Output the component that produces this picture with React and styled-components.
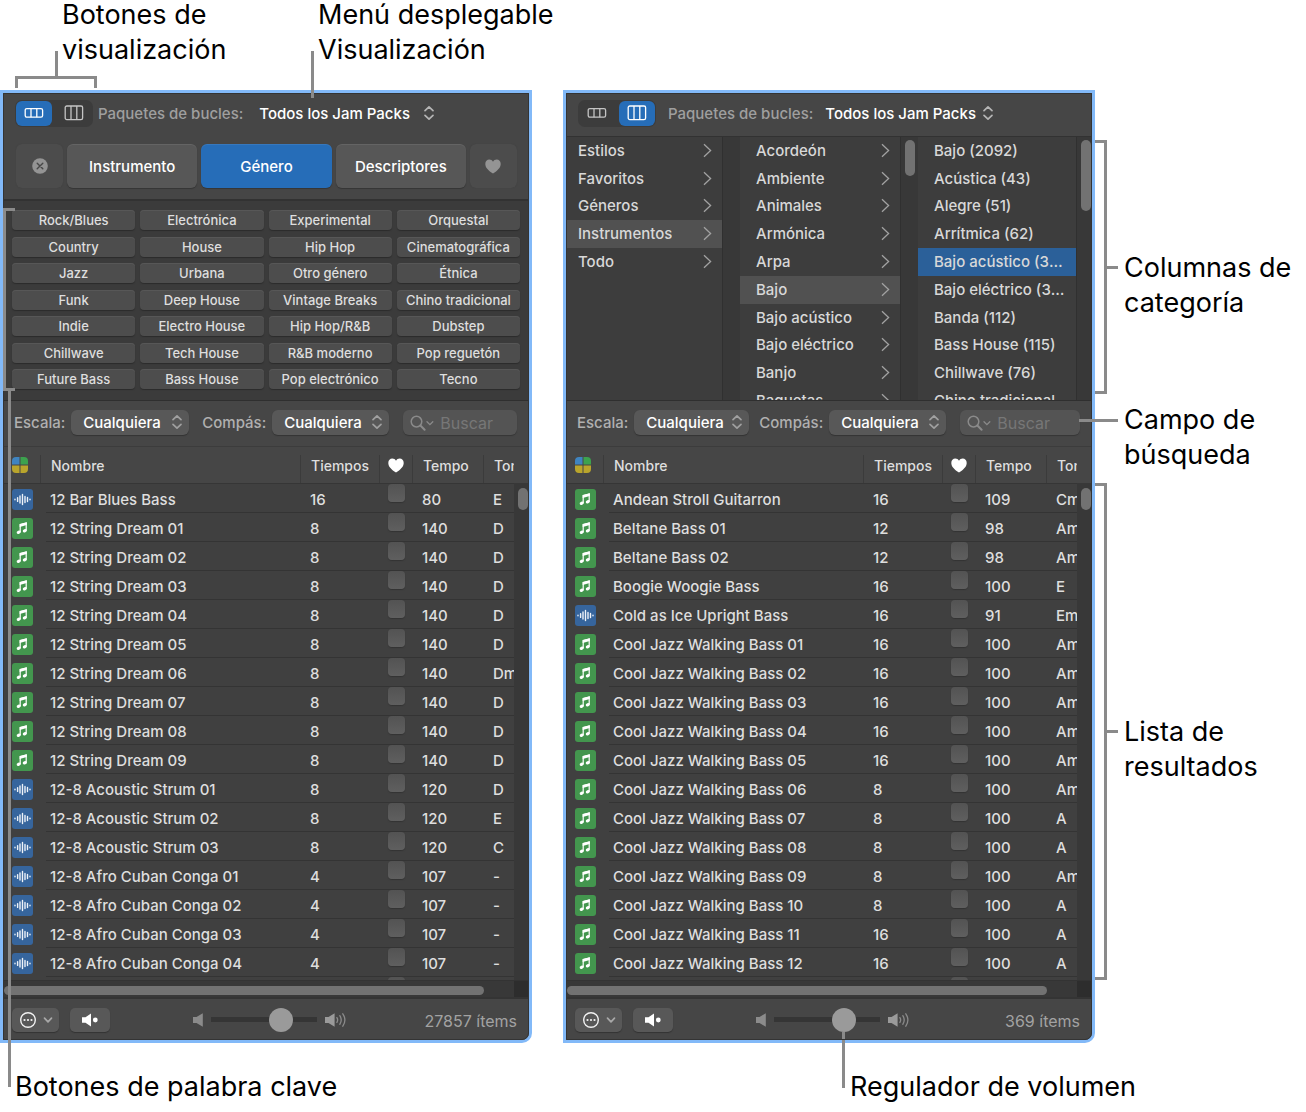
import { useState } from "react";
import styled, { createGlobalStyle, css } from "styled-components";

const genres = [
  "Rock/Blues", "Electrónica", "Experimental", "Orquestal",
  "Country", "House", "Hip Hop", "Cinematográfica",
  "Jazz", "Urbana", "Otro género", "Étnica",
  "Funk", "Deep House", "Vintage Breaks", "Chino tradicional",
  "Indie", "Electro House", "Hip Hop/R&B", "Dubstep",
  "Chillwave", "Tech House", "R&B moderno", "Pop reguetón",
  "Future Bass", "Bass House", "Pop electrónico", "Tecno",
];

const categories = ["Estilos", "Favoritos", "Géneros", "Instrumentos", "Todo"];
const instruments = [
  "Acordeón", "Ambiente", "Animales", "Armónica", "Arpa",
  "Bajo", "Bajo acústico", "Bajo eléctrico", "Banjo", "Baquetas",
];
const tags = [
  "Bajo (2092)", "Acústica (43)", "Alegre (51)", "Arrítmica (62)", "Bajo acústico (369)",
  "Bajo eléctrico (376)", "Banda (112)", "Bass House (115)", "Chillwave (76)", "Chino tradicional",
];

// kind, name, beats, tempo, key
const genreLoops = [
  ["audio", "12 Bar Blues Bass", 16, 80, "E"],
  ["midi", "12 String Dream 01", 8, 140, "D"],
  ["midi", "12 String Dream 02", 8, 140, "D"],
  ["midi", "12 String Dream 03", 8, 140, "D"],
  ["midi", "12 String Dream 04", 8, 140, "D"],
  ["midi", "12 String Dream 05", 8, 140, "D"],
  ["midi", "12 String Dream 06", 8, 140, "Dm"],
  ["midi", "12 String Dream 07", 8, 140, "D"],
  ["midi", "12 String Dream 08", 8, 140, "D"],
  ["midi", "12 String Dream 09", 8, 140, "D"],
  ["audio", "12-8 Acoustic Strum 01", 8, 120, "D"],
  ["audio", "12-8 Acoustic Strum 02", 8, 120, "E"],
  ["audio", "12-8 Acoustic Strum 03", 8, 120, "C"],
  ["audio", "12-8 Afro Cuban Conga 01", 4, 107, "-"],
  ["audio", "12-8 Afro Cuban Conga 02", 4, 107, "-"],
  ["audio", "12-8 Afro Cuban Conga 03", 4, 107, "-"],
  ["audio", "12-8 Afro Cuban Conga 04", 4, 107, "-"],
];

const bassLoops = [
  ["midi", "Andean Stroll Guitarron", 16, 109, "Cm"],
  ["midi", "Beltane Bass 01", 12, 98, "Am"],
  ["midi", "Beltane Bass 02", 12, 98, "Am"],
  ["midi", "Boogie Woogie Bass", 16, 100, "E"],
  ["audio", "Cold as Ice Upright Bass", 16, 91, "Em"],
  ["midi", "Cool Jazz Walking Bass 01", 16, 100, "Am"],
  ["midi", "Cool Jazz Walking Bass 02", 16, 100, "Am"],
  ["midi", "Cool Jazz Walking Bass 03", 16, 100, "Am"],
  ["midi", "Cool Jazz Walking Bass 04", 16, 100, "Am"],
  ["midi", "Cool Jazz Walking Bass 05", 16, 100, "Am"],
  ["midi", "Cool Jazz Walking Bass 06", 8, 100, "Am"],
  ["midi", "Cool Jazz Walking Bass 07", 8, 100, "A"],
  ["midi", "Cool Jazz Walking Bass 08", 8, 100, "A"],
  ["midi", "Cool Jazz Walking Bass 09", 8, 100, "Am"],
  ["midi", "Cool Jazz Walking Bass 10", 8, 100, "A"],
  ["midi", "Cool Jazz Walking Bass 11", 16, 100, "A"],
  ["midi", "Cool Jazz Walking Bass 12", 16, 100, "A"],
];

/* icons */

const RowsIcon = () => (
  <svg width="20" height="12" viewBox="0 0 20 12" fill="none" stroke="currentColor" strokeWidth="1.3">
    <rect x="1.2" y="1.6" width="17.4" height="8.6" rx="1.6" />
    <path d="M7 1.6v8.6M12.8 1.6v8.6" />
  </svg>
);

const ColumnsIcon = () => (
  <svg width="20" height="16" viewBox="0 0 20 16" fill="none" stroke="currentColor" strokeWidth="1.3">
    <rect x="1.2" y="1" width="17.4" height="13.6" rx="1.6" />
    <path d="M7 1v13.6M12.8 1v13.6" />
  </svg>
);

const UpDownIcon = () => (
  <svg width="12" height="16" viewBox="0 0 12 16" fill="none" stroke="currentColor" strokeWidth="1.7" strokeLinecap="round" strokeLinejoin="round">
    <path d="M2 5.6 6 1.8l4 3.8M2 10.4l4 3.8 4-3.8" />
  </svg>
);

const HeartIcon = () => (
  <svg width="16" height="15" viewBox="0 0 16 15" fill="currentColor">
    <path d="M8 14.6C3.6 11.6.3 8.6.3 4.9.3 2.3 2.1.5 4.3.5 5.9.5 7.2 1.3 8 2.7 8.8 1.3 10.1.5 11.7.5c2.2 0 4 1.8 4 4.4 0 3.7-3.3 6.7-7.7 9.7z" />
  </svg>
);

const ClearIcon = () => (
  <svg width="16" height="16" viewBox="0 0 16 16">
    <circle cx="8" cy="8" r="7.8" fill="#949494" />
    <path d="M5.2 5.2l5.6 5.6M10.8 5.2l-5.6 5.6" stroke="#484848" strokeWidth="1.4" strokeLinecap="round" />
  </svg>
);

const ChevronRight = () => (
  <svg width="9" height="15" viewBox="0 0 9 15" fill="none" stroke="#a2a2a2" strokeWidth="1.3">
    <path d="M1 1.2l6.6 6.3L1 13.8" />
  </svg>
);

const SearchIcon = () => (
  <svg width="24" height="16" viewBox="0 0 24 16" fill="none" stroke="#8a8a8a" strokeWidth="1.5" strokeLinecap="round">
    <circle cx="6.5" cy="6.6" r="5.3" />
    <path d="M10.4 10.5l4.2 4.3" strokeWidth="2" />
    <path d="M17 6.8l2.9 2.9 2.9-2.9" strokeWidth="1.3" />
  </svg>
);

const KindsIcon = () => (
  <svg width="16" height="16" viewBox="0 0 16 16">
    <path d="M0 4a4 4 0 0 1 4-4h3.5v7.5H0z" fill="#3f84c0" />
    <path d="M8.5 0H12a4 4 0 0 1 4 4v3.5H8.5z" fill="#3ca24e" />
    <path d="M0 8.5h7.5V16H4a4 4 0 0 1-4-4zM8.5 8.5H16V12a4 4 0 0 1-4 4H8.5z" fill="#b9a52c" />
  </svg>
);

const AudioIcon = () => (
  <svg width="21" height="21" viewBox="0 0 21 21" role="img" aria-label="Audio">
    <rect width="21" height="21" rx="3" fill="#36659d" />
    <path d="M3 10.3v.4M5.6 8.6v3.8M8 7v7M10.5 5.4v10.2M13 7.4v6.2M15.5 8.4v4.2M18 10.3v.4" stroke="#eef3f9" strokeWidth="1.4" strokeLinecap="round" />
  </svg>
);

const MidiIcon = () => (
  <svg width="21" height="21" viewBox="0 0 21 21" role="img" aria-label="MIDI">
    <rect width="21" height="21" rx="3" fill="#43964e" />
    <path d="M8.2 14.2V6.6l6-1.5v7.6" fill="none" stroke="#fff" strokeWidth="1.2" />
    <path d="M7.6 6l7.2-1.800v2.900L7.600 8.900z" fill="#fff" />
    <ellipse cx="6.700" cy="14.300" rx="2.100" ry="1.600" fill="#fff" transform="rotate(-20 6.700 14.300)" />
    <ellipse cx="12.800" cy="12.800" rx="2.100" ry="1.600" fill="#fff" transform="rotate(-20 12.800 12.800)" />
  </svg>
);

const MoreIcon = () => (
  <svg width="34" height="18" viewBox="0 0 34 18" fill="none" stroke="#f2f2f2">
    <circle cx="9" cy="9" r="7.3" strokeWidth="1.4" />
    <path d="M5.5 9h.01M9 9h.01M12.5 9h.01" strokeWidth="2.2" strokeLinecap="round" />
    <path d="M25.5 7.2L29 10.8l3.5-3.600" stroke="#a8a8a8" strokeWidth="1.7" strokeLinecap="round" strokeLinejoin="round" />
  </svg>
);

const MuteIcon = () => (
  <svg width="18" height="14" viewBox="0 0 18 14" fill="#fff">
    <path d="M1 4.2h3.5L10 .4v13.2L4.5 9.8H1z" />
    <circle cx="14.3" cy="7" r="2.4" />
  </svg>
);

const SpeakerIcon = () => (
  <svg width="10" height="14" viewBox="0 0 10 14" fill="#8b8b8b">
    <path d="M0 4h3.5L9.8.3v13.4L3.5 10H0z" />
  </svg>
);

const LoudIcon = () => (
  <svg width="22" height="16" viewBox="0 0 22 16" fill="none" stroke="#8b8b8b" strokeWidth="1.3" strokeLinecap="round">
    <path d="M0 5h3.5L9.600 1.300v13.400L3.500 11H0z" fill="#9a9a9a" stroke="none" />
    <path d="M11.900 5.600c1 1.600 1 3.200 0 4.800M14.800 3.700c1.900 2.900 1.900 5.700 0 8.600M17.800 1.800c2.900 4.300 2.900 8.100 0 12.400" />
  </svg>
);

/* parts */

function PackPicker({ id, compact }) {
  return (
    <>
      <PackLabel htmlFor={id} $compact={compact}>Paquetes de bucles:</PackLabel>
      <SelectBox $plain>
        <Select id={id} $plain $w={compact ? 187 : 194}>
          <option>Todos los Jam Packs</option>
        </Select>
        <UpDownIcon />
      </SelectBox>
    </>
  );
}

function ViewSwitch({ active }) {
  return (
    <Segments role="group" aria-label="Botones de visualización">
      <Segment type="button" $on={active === "buttons"} aria-label="Visualización de botones">
        <RowsIcon />
      </Segment>
      <Segment type="button" $on={active === "columns"} aria-label="Visualización por columnas">
        <ColumnsIcon />
      </Segment>
    </Segments>
  );
}

function Filters({ id, compact }) {
  return (
    <FilterBar>
      <FilterLabel htmlFor={`${id}-scale`}>Escala:</FilterLabel>
      <SelectBox>
        <Select id={`${id}-scale`} $w={compact ? 115 : 118}>
          <option>Cualquiera</option>
        </Select>
        <UpDownIcon />
      </SelectBox>
      <FilterLabel htmlFor={`${id}-meter`} $before={compact ? 10 : 13}>Compás:</FilterLabel>
      <SelectBox>
        <Select id={`${id}-meter`} $w={117}>
          <option>Cualquiera</option>
        </Select>
        <UpDownIcon />
      </SelectBox>
      <SearchField>
        <SearchIcon />
        <SearchInput type="text" placeholder="Buscar" aria-label="Buscar" />
      </SearchField>
    </FilterBar>
  );
}

function Results({ loops }) {
  return (
    <>
      <ResultsArea>
        <Table>
          <colgroup>
            <Col $w={37} />
            <Col />
            <Col $w={79} />
            <Col $w={33} />
            <Col $w={71} />
            <Col $w={31} />
          </colgroup>
          <thead>
            <tr>
              <Th $icon><KindsIcon /></Th>
              <Th>Nombre</Th>
              <Th>Tiempos</Th>
              <Th $heart><HeartIcon /></Th>
              <Th>Tempo</Th>
              <Th>Tono</Th>
            </tr>
          </thead>
          <tbody>
            {loops.map(([kind, name, beats, tempo, key]) => (
              <Row key={name}>
                <IconCell>{kind === "audio" ? <AudioIcon /> : <MidiIcon />}</IconCell>
                <Td>{name}</Td>
                <Td>{beats}</Td>
                <CheckCell>
                  <Check type="checkbox" aria-label={`Favorito: ${name}`} />
                </CheckCell>
                <Td>{tempo}</Td>
                <Td>{key}</Td>
              </Row>
            ))}
            <Row>
              <IconCell />
              <Td />
              <Td />
              <CheckCell>
                <Check type="checkbox" aria-label="Favorito" />
              </CheckCell>
              <Td />
              <Td />
            </Row>
          </tbody>
        </Table>
        <ResultsTrack>
          <Thumb $h={22} />
        </ResultsTrack>
      </ResultsArea>
      <HorizontalTrack>
        <HorizontalThumb />
      </HorizontalTrack>
    </>
  );
}

function Footer({ count, callout }) {
  const [volume, setVolume] = useState(71);

  return (
    <FooterBar>
      <FooterButton type="button" aria-label="Acciones" $w={47}><MoreIcon /></FooterButton>
      <FooterButton type="button" aria-label="Silenciar" $w={40}><MuteIcon /></FooterButton>
      <Volume>
        <SpeakerIcon />
        <SliderBox>
          <Slider
            type="range"
            aria-label="Volumen"
            value={volume}
            onChange={(e) => setVolume(Number(e.target.value))}
          />
          {callout && <SliderLine />}
        </SliderBox>
        <LoudIcon />
      </Volume>
      <Count>{count} ítems</Count>
    </FooterBar>
  );
}

function CategoryColumn({ items, selected, arrows, blue, thumb }) {
  return (
    <>
      <ColumnList>
        {items.map((item) => (
          <li key={item}>
            <ColumnItem
              type="button"
              $on={item === selected}
              $blue={blue}
              $arrow={arrows}
              $inset={items !== categories}
            >
              <span>{item}</span>
              {arrows && <ChevronRight />}
            </ColumnItem>
          </li>
        ))}
      </ColumnList>
      <ColumnTrack>{thumb && <Thumb $h={thumb} />}</ColumnTrack>
    </>
  );
}

export default function App() {
  return (
    <Page>
      <GlobalStyle />
      <TopCaptions>
        <ViewCaption>
          Botones de
          <br />
          visualización
        </ViewCaption>
        <MenuCaption>
          Menú desplegable
          <br />
          Visualización
        </MenuCaption>
      </TopCaptions>

      <Stage>
        <Panel aria-label="Visualización de botones">
          <Toolbar>
            <ViewSwitch active="buttons" />
            <PackPicker id="packs-a" />
          </Toolbar>
          <Tabs>
            <SideTab type="button" aria-label="Borrar"><ClearIcon /></SideTab>
            <Tab type="button">Instrumento</Tab>
            <Tab type="button" $on>Género</Tab>
            <Tab type="button">Descriptores</Tab>
            <SideTab type="button" aria-label="Favoritos"><HeartIcon /></SideTab>
          </Tabs>
          <Keywords>
            {genres.map((genre) => (
              <Keyword type="button" key={genre}>{genre}</Keyword>
            ))}
          </Keywords>
          <Filters id="a" />
          <Results loops={genreLoops} />
          <Footer count={27857} />
          <KeywordBracket />
          <KeywordLine />
        </Panel>

        <Panel aria-label="Visualización por columnas">
          <Toolbar>
            <ViewSwitch active="columns" />
            <PackPicker id="packs-b" compact />
          </Toolbar>
          <Columns>
            <CategoryColumn items={categories} selected="Instrumentos" arrows />
            <CategoryColumn items={instruments} selected="Bajo" arrows thumb={36} />
            <CategoryColumn items={tags} selected="Bajo acústico (369)" blue thumb={71} />
          </Columns>
          <Filters id="b" compact />
          <Results loops={bassLoops} />
          <Footer count={369} callout />
        </Panel>

        <SideCaptions>
          <Group $h={254}>
            <Bracket />
            <Stub />
            <SideCaption>
              Columnas de
              <br />
              categoría
            </SideCaption>
          </Group>
          <SearchGroup>
            <Stub $long />
            <SideCaption>
              Campo de
              <br />
              búsqueda
            </SideCaption>
          </SearchGroup>
          <Group $h={497}>
            <Bracket />
            <Stub />
            <SideCaption>
              Lista de
              <br />
              resultados
            </SideCaption>
          </Group>
        </SideCaptions>

        <BottomCaption $left={15}>Botones de palabra clave</BottomCaption>
        <BottomCaption $left={287}>Regulador de volumen</BottomCaption>
      </Stage>
    </Page>
  );
}

const line = "#8a8a8a";

const GlobalStyle = createGlobalStyle`
  *, *::before, *::after {
    box-sizing: border-box;
  }
  body {
    margin: 0;
    background: #fff;
    font-family: Inter, "Liberation Sans", sans-serif;
  }
  button, input, select {
    font-family: inherit;
  }
  svg {
    display: block;
    flex-shrink: 0;
  }
`;

const Page = styled.main`
  min-width: 1200px;
`;

const captionText = css`
  font-size: 27px;
  line-height: 35px;
  color: #000;
  white-space: nowrap;
`;

const TopCaptions = styled.div`
  display: flex;
  align-items: flex-end;
  height: 90px;
  padding: 0 0 23px 62px;
`;

const ViewCaption = styled.div`
  ${captionText}
  position: relative;
  width: 256px;
  &::before {
    content: "";
    position: absolute;
    left: -7px;
    top: 54px;
    width: 3px;
    height: 26px;
    background: ${line};
  }
  &::after {
    content: "";
    position: absolute;
    left: -47px;
    top: 79px;
    width: 82px;
    height: 12px;
    border: 3px solid ${line};
    border-bottom: 0;
  }
`;

const MenuCaption = styled.div`
  ${captionText}
  position: relative;
  &::before {
    content: "";
    position: absolute;
    z-index: 3;
    left: -7px;
    top: 54px;
    width: 3px;
    height: 47px;
    background: ${line};
  }
`;

const Stage = styled.div`
  display: grid;
  grid-template-columns: minmax(0, 1fr) minmax(0, 1fr) 180px;
  column-gap: 31px;
  row-gap: 26px;
`;

const Panel = styled.section`
  position: relative;
  display: flex;
  flex-direction: column;
  border: 3px solid #82b9f8;
  border-bottom-right-radius: 10px;
  background: #464646;
  color: #dedede;
  &::after {
    content: "";
    position: absolute;
    inset: 0;
    border: 1px solid #343434;
    border-bottom-right-radius: 7px;
    pointer-events: none;
  }
`;

const Toolbar = styled.div`
  display: flex;
  align-items: center;
  height: 43px;
  padding: 0 12px 3px;
`;

const Segments = styled.div`
  display: flex;
  gap: 4px;
  padding: 1px;
  border-radius: 7px;
  background: #3c3c3c;
`;

const Segment = styled.button`
  display: flex;
  align-items: center;
  justify-content: center;
  width: 36px;
  height: 25px;
  padding: 0;
  border: 0;
  border-radius: 6px;
  background: ${(props) => (props.$on ? "#266db8" : "transparent")};
  color: ${(props) => (props.$on ? "#fff" : "#c4c4c4")};
`;

const PackLabel = styled.label`
  margin: ${(props) => (props.$compact ? "0 0 0 12px" : "0 4px 0 5px")};
  font-size: 15px;
  font-weight: 500;
  color: #9f9f9f;
`;

const SelectBox = styled.span`
  position: relative;
  display: flex;
  color: ${(props) => (props.$plain ? "#b5b5b5" : "#a0a0a0")};
  svg {
    position: absolute;
    right: 6px;
    top: 4px;
    pointer-events: none;
  }
`;

const Select = styled.select`
  appearance: none;
  height: 25px;
  width: ${(props) => props.$w}px;
  padding: 0 0 0 12px;
  border: 0;
  border-radius: 6px;
  background: ${(props) => (props.$plain ? "transparent" : "#585858")};
  box-shadow: ${(props) => (props.$plain ? "none" : "0 1px 1px #333")};
  color: #fff;
  font-size: 15px;
  font-weight: 500;
`;

const Tabs = styled.div`
  display: flex;
  gap: 4px;
  height: 63px;
  padding: 8px 12px 11px 13px;
`;

const Tab = styled.button`
  flex: 1;
  padding: 0;
  border: 0;
  border-radius: 6px;
  background: ${(props) => (props.$on ? "#266db8" : "#575757")};
  box-shadow: 0 1px 1px #353535, inset 0 1px 0 rgba(255, 255, 255, 0.08);
  color: #fff;
  font-size: 15px;
  font-weight: 500;
`;

const SideTab = styled(Tab)`
  display: flex;
  align-items: center;
  justify-content: center;
  flex: 0 0 47px;
  background: #4c4c4c;
  box-shadow: 0 0 1px #3c3c3c;
  color: #949494;
`;

const Keywords = styled.div`
  display: grid;
  grid-template-columns: repeat(4, minmax(0, 1fr));
  grid-template-rows: repeat(7, 20px);
  column-gap: 5px;
  align-content: space-between;
  height: 202px;
  padding: 9px 9px 11px;
  border-top: 2px solid #323232;
  border-bottom: 1px solid #2f2f2f;
  background: #3b3b3b;
`;

const Keyword = styled.button`
  padding: 0;
  border: 0;
  border-radius: 4px;
  background: #4d4d4d;
  box-shadow: 0 1px 1px #2c2c2c, inset 0 1px 0 #575757;
  color: #dedede;
  font-size: 13px;
  font-weight: 500;
  white-space: nowrap;
`;

const Columns = styled.div`
  display: grid;
  grid-template-columns: 156fr 18px 160fr 18px 158fr 16px;
  height: 265px;
  overflow: hidden;
  border-top: 1px solid #323232;
  border-bottom: 1px solid #2f2f2f;
  background: #3d3d3d;
`;

const ColumnList = styled.ul`
  display: grid;
  grid-template-rows: repeat(10, 1fr);
  height: 278px;
  min-width: 0;
  margin: 0;
  padding: 0;
  list-style: none;
  li {
    display: flex;
    min-width: 0;
  }
`;

const ColumnItem = styled.button`
  display: flex;
  align-items: center;
  justify-content: space-between;
  width: 100%;
  min-width: 0;
  padding: 0 ${(props) => (props.$arrow ? 10 : 4)}px 1px ${(props) => (props.$inset ? 16 : 12)}px;
  border: 0;
  background: ${(props) => (props.$on ? (props.$blue ? "#2b6099" : "#515151") : "transparent")};
  color: #d8d8d8;
  font-size: 15px;
  font-weight: 500;
  span {
    overflow: hidden;
    text-overflow: ellipsis;
    white-space: nowrap;
  }
`;

const ColumnTrack = styled.div`
  padding: 3px 0 0 4px;
  border-left: 1px solid #303030;
  background: #383838;
`;

const Thumb = styled.div`
  width: 10px;
  height: ${(props) => props.$h}px;
  border-radius: 5px;
  background: #727272;
`;

const FilterBar = styled.div`
  display: flex;
  align-items: center;
  height: 46px;
  padding: 0 12px 2px 11px;
  border-bottom: 1px solid #3c3c3c;
`;

const FilterLabel = styled.label`
  margin: 0 6px 0 ${(props) => props.$before || 0}px;
  font-size: 15px;
  font-weight: 500;
  color: #b0b0b0;
`;

const SearchField = styled.label`
  display: flex;
  align-items: center;
  flex: 1;
  min-width: 0;
  gap: 6px;
  height: 25px;
  margin-left: 14px;
  padding: 0 7px;
  border-radius: 6px;
  background: #545454;
  box-shadow: 0 1px 1px #363636;
`;

const SearchInput = styled.input`
  width: 100%;
  min-width: 0;
  padding: 0;
  border: 0;
  outline: 0;
  background: transparent;
  color: #fff;
  font-size: 16px;
  &::placeholder {
    color: #777;
  }
`;

const ResultsArea = styled.div`
  display: flex;
  align-items: stretch;
  height: 533px;
  overflow: hidden;
  background: #404040;
`;

const Table = styled.table`
  flex: 1;
  width: 0;
  height: 100%;
  table-layout: fixed;
  border-collapse: separate;
  border-spacing: 0;
`;

const Col = styled.col`
  width: ${(props) => (props.$w ? `${props.$w}px` : "auto")};
`;

const Th = styled.th`
  height: 37px;
  padding: ${(props) => (props.$heart || props.$icon ? "0 0 0 9px" : "0 0 0 11px")};
  overflow: hidden;
  border-bottom: 1px solid #363636;
  background: linear-gradient(#3b3b3b, #3b3b3b) no-repeat 0 8px / ${(props) => (props.$icon ? 0 : 1)}px 100% #464646;
  color: ${(props) => (props.$heart ? "#fff" : "#dedede")};
  font-size: 14px;
  font-weight: 500;
  text-align: left;
  white-space: nowrap;
`;

const Row = styled.tr`
  background: linear-gradient(#343434, #343434) no-repeat 43px 100% / 100% 1px;
`;

const Td = styled.td`
  height: 29px;
  padding: 2px 0 0 10px;
  overflow: hidden;
  font-size: 15px;
  font-weight: 500;
  line-height: 20px;
  white-space: nowrap;
`;

const IconCell = styled(Td)`
  padding: 1px 0 0 9px;
`;

const CheckCell = styled(Td)`
  padding: 0 0 0 9px;
  vertical-align: top;
`;

const Check = styled.input`
  display: block;
  appearance: none;
  width: 17px;
  height: 18px;
  margin: 0;
  border-radius: 4px;
  background: linear-gradient(#535353, #5f5f5f);
  box-shadow: 0 1px 1px #333;
`;

const ResultsTrack = styled.div`
  width: 15px;
  padding: 41px 0 0 4px;
  background: linear-gradient(#464646, #464646) no-repeat 0 0 / 100% 36px #383838;
`;

const HorizontalTrack = styled.div`
  height: 19px;
  padding: 5px 45px 0 1px;
  border-top: 1px solid #333;
  border-bottom: 2px solid #343434;
  background: linear-gradient(#2d2d2d, #2d2d2d) no-repeat 100% 0 / 15px 100% #383838;
`;

const HorizontalThumb = styled.div`
  height: 9px;
  border-radius: 5px;
  background: #727272;
`;

const FooterBar = styled.div`
  display: flex;
  align-items: center;
  height: 41px;
  padding: 0 12px 0 9px;
`;

const FooterButton = styled.button`
  display: flex;
  align-items: center;
  justify-content: center;
  width: ${(props) => props.$w}px;
  height: 24px;
  margin-right: 11px;
  padding: 0;
  border: 0;
  border-radius: 5px;
  background: #585858;
  box-shadow: 0 1px 1px #333;
`;

const Volume = styled.div`
  display: flex;
  align-items: center;
  gap: 8px;
  margin-left: 72px;
`;

const SliderBox = styled.span`
  position: relative;
  display: flex;
`;

const Slider = styled.input`
  appearance: none;
  width: 106px;
  height: 24px;
  margin: 0;
  background: linear-gradient(#353535, #353535) no-repeat 50% 50% / 100% 5px;
  &::-webkit-slider-thumb {
    appearance: none;
    width: 24px;
    height: 24px;
    border-radius: 50%;
    background: #9a9a9a;
  }
`;

const SliderLine = styled.span`
  position: absolute;
  left: 68px;
  top: 24px;
  width: 3px;
  height: 56px;
  background: ${line};
`;

const Count = styled.span`
  margin-left: auto;
  padding-top: 3px;
  font-size: 16px;
  color: #a2a2a2;
`;

/* callout lines drawn over the first panel */

const KeywordBracket = styled.span`
  position: absolute;
  z-index: 2;
  left: 0;
  top: 115px;
  width: 12px;
  height: 183px;
  border: 3px solid ${line};
  border-right: 0;
`;

const KeywordLine = styled.span`
  position: absolute;
  z-index: 2;
  left: 5px;
  top: 296px;
  bottom: -47px;
  width: 3px;
  background: ${line};
`;

const SideCaptions = styled.div`
  display: flex;
  flex-direction: column;
  margin-left: -31px;
  padding-top: 50px;
`;

const Group = styled.div`
  display: flex;
  align-items: center;
  height: ${(props) => props.$h}px;
`;

const SearchGroup = styled(Group)`
  position: relative;
  align-items: flex-start;
  height: 89px;
  padding-top: 8px;
`;

const Bracket = styled.span`
  width: 12px;
  height: 100%;
  border: 3px solid ${line};
  border-left: 0;
`;

const Stub = styled.span`
  width: ${(props) => (props.$long ? 39 : 11)}px;
  height: 3px;
  margin: ${(props) => (props.$long ? "17px 0 0 -16px" : "0")};
  background: ${line};
`;

const SideCaption = styled.div`
  ${captionText}
  height: 35px;
  padding-left: 6px;
`;

const BottomCaption = styled.div`
  ${captionText}
  padding-left: ${(props) => props.$left}px;
`;
